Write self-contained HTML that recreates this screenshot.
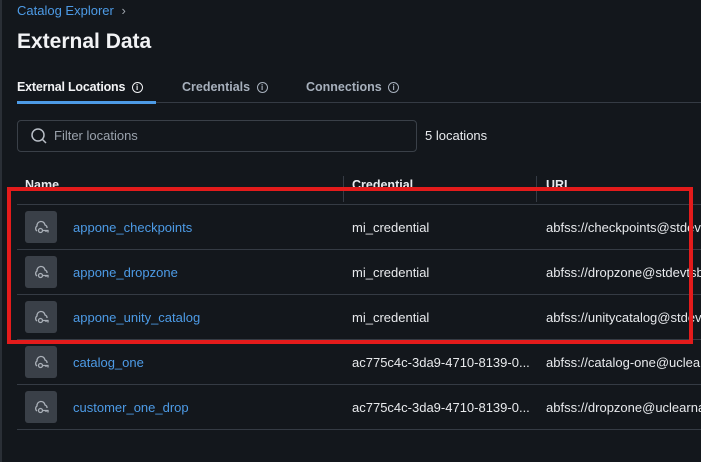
<!DOCTYPE html>
<html><head><meta charset="utf-8"><style>
*{margin:0;padding:0;box-sizing:border-box}
body{width:701px;height:462px;background:#13171c;font-family:"Liberation Sans",sans-serif;color:#e8eaed;position:relative;overflow:hidden}
.a{position:absolute;white-space:nowrap}
.lb{position:absolute;left:0;top:0;width:2px;height:462px;background:#2a2f36}
.hl{position:absolute;left:17px;right:0;height:1px;background:#353b44}
.ic{position:absolute;left:25px;width:32px;height:32px;background:#3a4048;border-radius:3px}
.nm{color:#4d9be6;font-size:13px}
.tx{font-size:13px;color:#e8eaed}
.inf{display:inline-block;width:11px;height:11px;border:1.3px solid currentColor;border-radius:50%;font-size:8px;line-height:9px;text-align:center;vertical-align:1px;margin-left:3px;font-weight:bold}
</style></head><body>
<div class="lb"></div>
<div class="a" style="left:17px;top:3px;font-size:13px;color:#4d9be6">Catalog Explorer <span style="color:#a0a6ae;margin-left:4px">›</span></div>
<div class="a" style="left:17px;top:30px;font-size:21px;font-weight:bold;color:#f2f3f5">External Data</div>
<div class="a" style="left:17px;top:80px;font-size:12.5px;font-weight:bold;color:#f2f3f5;letter-spacing:-0.2px">External Locations <span class="inf">i</span></div>
<div class="a" style="left:182px;top:80px;font-size:12.5px;font-weight:bold;color:#a7b0bc">Credentials <span class="inf">i</span></div>
<div class="a" style="left:306px;top:80px;font-size:12.5px;font-weight:bold;color:#a7b0bc">Connections <span class="inf">i</span></div>
<div class="a" style="left:17px;top:102px;width:684px;height:1px;background:#353b44"></div>
<div class="a" style="left:17px;top:101px;width:139px;height:3px;background:#4d9be6"></div>
<div class="a" style="left:17px;top:120px;width:400px;height:32px;border:1px solid #3a4048;border-radius:4px"></div>
<svg class="a" style="left:30px;top:127px" width="18" height="18" viewBox="0 0 18 18"><circle cx="8" cy="8" r="6" fill="none" stroke="#b8bec6" stroke-width="1.5"/><path d="M12.5 12.5L16 16" stroke="#b8bec6" stroke-width="1.5"/></svg>
<div class="a" style="left:54px;top:128px;font-size:13px;color:#9aa2ac">Filter locations</div>
<div class="a" style="left:425px;top:128px;font-size:13px;color:#e8eaed">5 locations</div>
<div class="a" style="left:25px;top:178px;font-size:12.5px;font-weight:bold">Name</div>
<div class="a" style="left:352px;top:178px;font-size:12.5px;font-weight:bold">Credential</div>
<div class="a" style="left:546px;top:178px;font-size:12.5px;font-weight:bold">URL</div>
<div class="a" style="left:343px;top:176px;width:1px;height:26px;background:#353b44"></div>
<div class="a" style="left:536px;top:176px;width:1px;height:26px;background:#353b44"></div>
<div class="hl" style="top:204px"></div>
<div class="hl" style="top:249px"></div>
<div class="hl" style="top:294px"></div>
<div class="hl" style="top:339px"></div>
<div class="hl" style="top:384px"></div>
<div class="hl" style="top:429px"></div>

<div class="ic" style="top:211px"></div><div class="ic" style="top:256px"></div><div class="ic" style="top:301px"></div><div class="ic" style="top:346px"></div><div class="ic" style="top:391px"></div>
<svg class="a" style="left:33px;top:219px" width="17" height="17" viewBox="0 0 17 17"><g fill="none" stroke="#aab0b8" stroke-width="1.3"><path d="M4 12A3 3 0 0 1 4 7A4 4 0 0 1 12 6A3 3 0 0 1 14 9"/><circle cx="7.5" cy="11.5" r="2"/><path d="M9.5 11.5H15V13.5M13 11.5V13"/></g></svg>
<svg class="a" style="left:33px;top:264px" width="17" height="17" viewBox="0 0 17 17"><g fill="none" stroke="#aab0b8" stroke-width="1.3"><path d="M4 12A3 3 0 0 1 4 7A4 4 0 0 1 12 6A3 3 0 0 1 14 9"/><circle cx="7.5" cy="11.5" r="2"/><path d="M9.5 11.5H15V13.5M13 11.5V13"/></g></svg>
<svg class="a" style="left:33px;top:309px" width="17" height="17" viewBox="0 0 17 17"><g fill="none" stroke="#aab0b8" stroke-width="1.3"><path d="M4 12A3 3 0 0 1 4 7A4 4 0 0 1 12 6A3 3 0 0 1 14 9"/><circle cx="7.5" cy="11.5" r="2"/><path d="M9.5 11.5H15V13.5M13 11.5V13"/></g></svg>
<svg class="a" style="left:33px;top:354px" width="17" height="17" viewBox="0 0 17 17"><g fill="none" stroke="#aab0b8" stroke-width="1.3"><path d="M4 12A3 3 0 0 1 4 7A4 4 0 0 1 12 6A3 3 0 0 1 14 9"/><circle cx="7.5" cy="11.5" r="2"/><path d="M9.5 11.5H15V13.5M13 11.5V13"/></g></svg>
<svg class="a" style="left:33px;top:399px" width="17" height="17" viewBox="0 0 17 17"><g fill="none" stroke="#aab0b8" stroke-width="1.3"><path d="M4 12A3 3 0 0 1 4 7A4 4 0 0 1 12 6A3 3 0 0 1 14 9"/><circle cx="7.5" cy="11.5" r="2"/><path d="M9.5 11.5H15V13.5M13 11.5V13"/></g></svg>

<div class="a nm" style="left:73px;top:220px">appone_checkpoints</div>
<div class="a tx" style="left:352px;top:220px">mi_credential</div>
<div class="a tx" style="left:546px;top:220px">abfss://checkpoints@stdevtsb</div>
<div class="a nm" style="left:73px;top:265px">appone_dropzone</div>
<div class="a tx" style="left:352px;top:265px">mi_credential</div>
<div class="a tx" style="left:546px;top:265px">abfss://dropzone@stdevtsb</div>
<div class="a nm" style="left:73px;top:310px">appone_unity_catalog</div>
<div class="a tx" style="left:352px;top:310px">mi_credential</div>
<div class="a tx" style="left:546px;top:310px">abfss://unitycatalog@stdev</div>
<div class="a nm" style="left:73px;top:355px">catalog_one</div>
<div class="a tx" style="left:352px;top:355px">ac775c4c-3da9-4710-8139-0...</div>
<div class="a tx" style="left:546px;top:355px">abfss://catalog-one@uclear</div>
<div class="a nm" style="left:73px;top:400px">customer_one_drop</div>
<div class="a tx" style="left:352px;top:400px">ac775c4c-3da9-4710-8139-0...</div>
<div class="a tx" style="left:546px;top:400px">abfss://dropzone@uclearna</div>

<div class="a" style="left:7px;top:187px;width:686px;height:157px;border:4px solid #e31b1b"></div>
</body></html>
